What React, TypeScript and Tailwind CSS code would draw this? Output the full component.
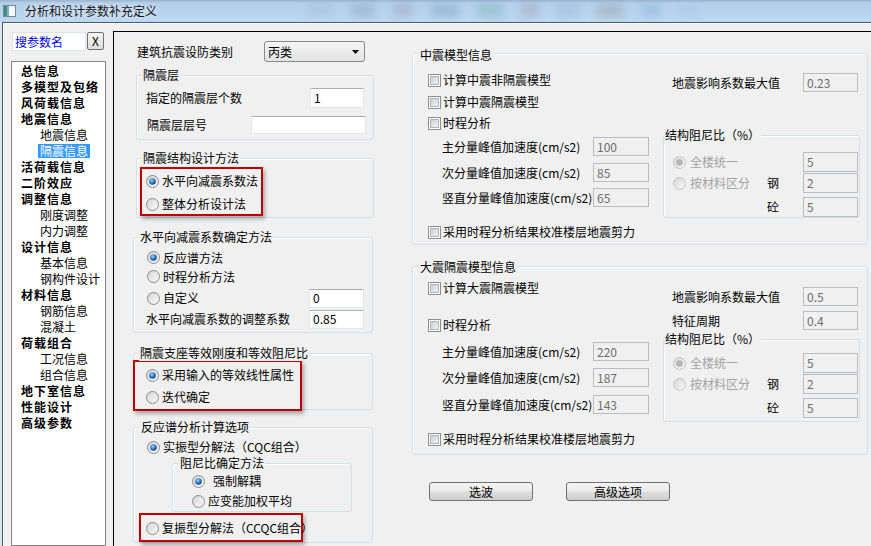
import React from 'react';

type Node = [string, number, boolean?];

const tree: Node[] = [
  ['总信息', 0],
  ['多模型及包络', 0],
  ['风荷载信息', 0],
  ['地震信息', 0],
  ['地震信息', 1],
  ['隔震信息', 1, true],
  ['活荷载信息', 0],
  ['二阶效应', 0],
  ['调整信息', 0],
  ['刚度调整', 1],
  ['内力调整', 1],
  ['设计信息', 0],
  ['基本信息', 1],
  ['钢构件设计', 1],
  ['材料信息', 0],
  ['钢筋信息', 1],
  ['混凝土', 1],
  ['荷载组合', 0],
  ['工况信息', 1],
  ['组合信息', 1],
  ['地下室信息', 0],
  ['性能设计', 0],
  ['高级参数', 0],
];

const Radio = ({ checked, disabled }: { checked?: boolean; disabled?: boolean }) => (
  <svg width="13" height="13" viewBox="0 0 13 13" className="shrink-0">
    <defs>
      <linearGradient id="rfill" x1="0" y1="0" x2="1" y2="1">
        <stop offset="0" stopColor="#d4d4d4" />
        <stop offset="1" stopColor="#fbfbfb" />
      </linearGradient>
      <radialGradient id="rdot" cx="0.4" cy="0.35" r="0.7">
        <stop offset="0" stopColor="#9ad6ff" />
        <stop offset="0.55" stopColor="#2a78c8" />
        <stop offset="1" stopColor="#0f3f78" />
      </radialGradient>
    </defs>
    <circle cx="6.5" cy="6.5" r="6" fill="url(#rfill)" stroke={disabled ? '#c4c4c4' : '#8c8c8c'} />
    {checked && <circle cx="6.5" cy="6.5" r="3.3" fill={disabled ? '#b4b4b4' : 'url(#rdot)'} />}
  </svg>
);

const Check = () => (
  <svg width="13" height="13" viewBox="0 0 13 13" className="shrink-0">
    <defs>
      <linearGradient id="cfill" x1="0" y1="0" x2="1" y2="1">
        <stop offset="0" stopColor="#c9cdd2" />
        <stop offset="1" stopColor="#f5f5f5" />
      </linearGradient>
    </defs>
    <rect x="0.5" y="0.5" width="12" height="12" fill="#fcfcfc" stroke="#8e8f8f" />
    <rect x="2.5" y="2.5" width="8" height="8" fill="url(#cfill)" stroke="#b0b4b9" />
  </svg>
);

const Field = ({ value, disabled, className }: { value?: string; disabled?: boolean; className: string }) => (
  <div
    className={`flex items-center px-[3px] border leading-[16px] ${
      disabled
        ? 'bg-[#f0f0f0] border-[#b9bdc1] text-[#6d6d6d]'
        : 'bg-white border-[#e2e7ee] border-t-[#abadb3] text-black'
    } ${className}`}
  >
    {value}
  </div>
);

const Group = ({
  title,
  className,
  lx = 'left-[5px]',
  ly = '-top-[9px]',
  children,
}: {
  title: string;
  className: string;
  lx?: string;
  ly?: string;
  children?: React.ReactNode;
}) => (
  <div className={`relative rounded-[3px] border border-[#d5dfe5] shadow-[inset_1px_1px_0_#fff] ${className}`}>
    <span className={`absolute ${ly} ${lx} bg-[#f0f0f0] px-[1px] leading-[16px] whitespace-nowrap`}>{title}</span>
    {children}
  </div>
);

const RedBox = ({ className, children }: { className: string; children: React.ReactNode }) => (
  <div className={`border-2 border-[#c00000] shadow-[2px_3px_4px_rgba(0,0,0,0.3)] ${className}`}>{children}</div>
);

const RadioRow = ({ label, checked, className }: { label: React.ReactNode; checked?: boolean; className: string }) => (
  <div className={`flex items-center gap-[3px] whitespace-nowrap ${className}`}>
    <Radio checked={checked} />
    <span>{label}</span>
  </div>
);

const CheckRow = ({ label, className }: { label: string; className: string }) => (
  <div className={`flex items-center gap-[2px] whitespace-nowrap ${className}`}>
    <Check />
    <span>{label}</span>
  </div>
);

const AccRow = ({ label, value, className }: { label: string; value: string; className: string }) => (
  <div className={`flex items-center h-[19px] ${className}`}>
    <span className="pl-[14px] w-[165px] whitespace-nowrap">{label}</span>
    <Field disabled value={value} className="w-[56px] h-[19px]" />
  </div>
);

const ValueRow = ({ label, value, className }: { label: string; value: string; className: string }) => (
  <div className={`flex items-center h-[19px] ${className}`}>
    <span className="pl-[9px] w-[140px]">{label}</span>
    <Field disabled value={value} className="w-[55px] h-[19px]" />
  </div>
);

const Damping = ({ className, pt }: { className: string; pt: string }) => (
  <Group title="结构阻尼比（%）" className={`w-[197px] h-[83px] ${className}`} lx="left-0" ly="-top-[9px]">
    <div className={`pl-[9px] ${pt}`}>
      <div className="flex items-center h-[20px]">
        <div className="w-[130px] flex items-center gap-[4px]">
          <Radio checked disabled />
          <span className="text-[#a3a3a3]">全楼统一</span>
        </div>
        <Field disabled value="5" className="w-[55px] h-[20px]" />
      </div>
      <div className="mt-[1px] flex items-center h-[20px]">
        <div className="w-[94px] flex items-center gap-[4px]">
          <Radio disabled />
          <span className="text-[#a3a3a3]">按材料区分</span>
        </div>
        <span className="w-[36px]">钢</span>
        <Field disabled value="2" className="w-[55px] h-[20px]" />
      </div>
      <div className="mt-[4px] flex items-center h-[20px]">
        <span className="ml-[94px] w-[36px]">砼</span>
        <Field disabled value="5" className="w-[55px] h-[20px]" />
      </div>
    </div>
  </Group>
);

const Button = ({ label }: { label: string }) => (
  <button className="w-[104px] h-[19px] rounded-[3px] border border-[#707070] bg-[linear-gradient(to_bottom,#f4f4f4_0%,#ebebeb_48%,#dddddd_52%,#cfcfcf_100%)] text-[12px] leading-[16px] text-black">
    {label}
  </button>
);

const App = () => {
  return (
    <div className="w-[871px] h-[546px] overflow-hidden flex flex-col bg-[#f0f0f0] text-[12px] leading-[16px] text-black font-['Noto_Sans_CJK_SC',sans-serif]">
      {/* title bar */}
      <div className="h-[22px] shrink-0 flex items-center overflow-hidden bg-[linear-gradient(to_bottom,#98b2cc_0px,#b4cfea_3px,#bdd8f2_100%)]">
        <svg width="13" height="12" viewBox="0 0 13 12" className="ml-[3px] shrink-0">
          <rect x="0.5" y="0.5" width="12" height="11" fill="#f4f6f8" stroke="#7c8590" />
          <rect x="1" y="1" width="3" height="10" fill="#3f8f7a" />
          <rect x="4" y="1" width="2" height="10" fill="#7fb0d8" />
        </svg>
        <span className="ml-[9px] text-[#151515] [text-shadow:0_0_6px_#ffffff]">分析和设计参数补充定义</span>
        <div className="ml-[150px] flex items-center gap-[18px] opacity-20 blur-[4px]">
          <div className="w-[26px] h-[14px] bg-[#8fa4bb]" />
          <div className="w-[24px] h-[14px] bg-[#5c6d80]" />
          <div className="w-[20px] h-[14px] bg-[#8a6470]" />
          <div className="w-[28px] h-[14px] bg-[#3f6b9a]" />
          <div className="w-[26px] h-[14px] bg-[#3d8a70]" />
          <div className="w-[18px] h-[14px] bg-[#9a5a66]" />
          <div className="w-[22px] h-[14px] bg-[#6b8fb8]" />
          <div className="w-[26px] h-[14px] bg-[#6e6a50]" />
          <div className="w-[20px] h-[14px] bg-[#4f86c2]" />
          <div className="w-[20px] h-[14px] bg-[#8fb6e0]" />
        </div>
      </div>

      <div className="flex flex-1 min-h-0">
        <div className="w-[2px] shrink-0 bg-[#dbe5ef]" />
        <div className="flex-1 flex border-l border-t border-[#4d5b69] shadow-[inset_1px_1px_0_#fafafa]">
          {/* sidebar */}
          <div className="w-[110px] shrink-0 pt-[9px] pl-[8px] flex flex-col">
            <div className="flex items-start">
              <div className="ml-[1px] w-[74px] h-[19px] bg-white border border-[#dde3ea] pl-[2px] flex items-center text-[#0000ff]">
                搜参数名
              </div>
              <div className="ml-[1px] w-[17px] h-[18px] rounded-[2px] border border-[#707070] bg-[linear-gradient(to_bottom,#f6f6f6,#dcdcdc)] flex items-center justify-center text-[12px]">
                X
              </div>
            </div>
            <div className="mt-[10px] w-[95px] h-[500px] bg-white border border-[#828790] pt-[1px]">
              {tree.map(([label, level, sel], i) =>
                level === 0 ? (
                  <div key={i} className="h-[16px] leading-[16px] pl-[9px] font-bold text-[12px] tracking-[1px] whitespace-nowrap">
                    {label}
                  </div>
                ) : (
                  <div key={i} className="h-[16px] pl-[26px] flex items-center">
                    <span
                      className={
                        sel ? 'px-[2px] leading-[14px] bg-[#3399ff] text-white' : 'px-[2px] leading-[16px]'
                      }
                    >
                      {label}
                    </span>
                  </div>
                )
              )}
            </div>
          </div>

          {/* main panel */}
          <div className="flex-1 mt-[8px] border-l border-t border-black flex">
            {/* left column */}
            <div className="w-[286px] shrink-0 pl-[19px] flex flex-col">
              <div className="mt-[9px] h-[21px] flex items-center">
                <span className="pl-[4px] w-[131px]">建筑抗震设防类别</span>
                <div className="w-[101px] h-[21px] rounded-[3px] border border-[#8a8a8a] bg-[linear-gradient(to_bottom,#f5f5f5,#e4e4e4)] flex items-center justify-between pl-[3px] pr-[5px]">
                  <span>丙类</span>
                  <svg width="7" height="4" viewBox="0 0 7 4">
                    <path d="M0 0H7L3.5 4Z" fill="#000" />
                  </svg>
                </div>
              </div>

              <Group title="隔震层" className="mt-[13px] ml-[3px] w-[238px] h-[65px]">
                <div className="pt-[12px] pl-[9px]">
                  <div className="flex items-center h-[20px]">
                    <span className="w-[164px]">指定的隔震层个数</span>
                    <Field value="1" className="w-[54px] h-[20px]" />
                  </div>
                  <div className="flex items-center h-[18px] mt-[8px]">
                    <span className="pl-[1px] w-[105px]">隔震层层号</span>
                    <Field className="w-[115px] h-[18px]" />
                  </div>
                </div>
              </Group>

              <Group title="隔震结构设计方法" className="mt-[18px] ml-[3px] w-[238px] h-[60px]">
                <RedBox className="ml-[3px] mt-[8px] w-[123px] h-[49px] pt-[2px] pl-[4px]">
                  <RadioRow checked label="水平向减震系数法" className="h-[20px]" />
                  <RadioRow label="整体分析设计法" className="h-[20px] mt-[3px]" />
                </RedBox>
              </Group>

              <Group title="水平向减震系数确定方法" className="mt-[19px] w-[240px] h-[96px]">
                <div className="pt-[10px] pl-[12px]">
                  <RadioRow checked label="反应谱方法" className="h-[19px] pl-[1px]" />
                  <RadioRow label="时程分析方法" className="h-[19px] pl-[1px]" />
                  <div className="mt-[2px] h-[20px] flex items-center">
                    <div className="w-[163px] flex items-center gap-[3px] pl-[1px]">
                      <Radio />
                      <span>自定义</span>
                    </div>
                    <Field value="0" className="w-[55px] h-[19px]" />
                  </div>
                  <div className="mt-[1px] h-[20px] flex items-center">
                    <span className="w-[163px]">水平向减震系数的调整系数</span>
                    <Field value="0.85" className="w-[55px] h-[19px]" />
                  </div>
                </div>
              </Group>

              <Group title="隔震支座等效刚度和等效阻尼比" className="mt-[20px] w-[240px] h-[57px]">
                <RedBox className="-ml-[1px] mt-[6px] w-[169px] h-[51px] pt-[3px] pl-[11px]">
                  <RadioRow checked label="采用输入的等效线性属性" className="h-[20px]" />
                  <RadioRow label="迭代确定" className="h-[20px] mt-[2px]" />
                </RedBox>
              </Group>

              <Group title="反应谱分析计算选项" className="mt-[17px] w-[240px] h-[116px]" lx="left-[6px]">
                <div className="pt-[9px] pl-[13px]">
                  <RadioRow checked label="实振型分解法（CQC组合）" className="h-[20px]" />
                </div>
                <Group title="阻尼比确定方法" className="mt-[6px] ml-[38px] w-[180px] h-[49px]" lx="left-[6px]">
                  <div className="pt-[7px] pl-[19px]">
                    <RadioRow checked label={<span className="pl-[5px]">强制解耦</span>} className="h-[20px]" />
                    <RadioRow label="应变能加权平均" className="h-[20px]" />
                  </div>
                </Group>
                <RedBox className="mt-[1px] ml-[5px] w-[164px] h-[29px] pt-[1px] pl-[5px]">
                  <RadioRow label="复振型分解法（CCQC组合）" className="h-[20px] mt-[2px]" />
                </RedBox>
              </Group>
            </div>

            {/* right column */}
            <div className="flex-1 pl-[12px] flex flex-col">
              <Group title="中震模型信息" className="mt-[21px] w-[456px] h-[192px]" lx="left-[6px]" ly="-top-[7px]">
                <div className="flex">
                  <div className="w-[250px] pl-[15px] flex flex-col">
                    <CheckRow label="计算中震非隔震模型" className="mt-[16px] h-[20px]" />
                    <CheckRow label="计算中震隔震模型" className="mt-[2px] h-[20px]" />
                    <CheckRow label="时程分析" className="mt-[1px] h-[20px]" />
                    <AccRow label="主分量峰值加速度(cm/s2)" value="100" className="mt-[4px]" />
                    <AccRow label="次分量峰值加速度(cm/s2)" value="85" className="mt-[7px]" />
                    <AccRow label="竖直分量峰值加速度(cm/s2)" value="65" className="mt-[6px]" />
                  </div>
                  <div className="w-[197px] flex flex-col">
                    <ValueRow label="地震影响系数最大值" value="0.23" className="mt-[19px]" />
                    <Damping className="mt-[43px]" pt="pt-[16px]" />
                  </div>
                </div>
                <CheckRow label="采用时程分析结果校准楼层地震剪力" className="mt-[4px] ml-[15px] h-[20px]" />
              </Group>

              <Group title="大震隔震模型信息" className="mt-[21px] w-[456px] h-[189px]" lx="left-[6px]" ly="-top-[8px]">
                <div className="flex">
                  <div className="w-[250px] pl-[15px] flex flex-col">
                    <CheckRow label="计算大震隔震模型" className="mt-[11px] h-[20px]" />
                    <CheckRow label="时程分析" className="mt-[17px] h-[20px]" />
                    <AccRow label="主分量峰值加速度(cm/s2)" value="220" className="mt-[7px]" />
                    <AccRow label="次分量峰值加速度(cm/s2)" value="187" className="mt-[7px]" />
                    <AccRow label="竖直分量峰值加速度(cm/s2)" value="143" className="mt-[8px]" />
                  </div>
                  <div className="w-[197px] flex flex-col">
                    <ValueRow label="地震影响系数最大值" value="0.5" className="mt-[20px]" />
                    <ValueRow label="特征周期" value="0.4" className="mt-[5px]" />
                    <Damping className="mt-[9px]" pt="pt-[13px]" />
                  </div>
                </div>
                <CheckRow label="采用时程分析结果校准楼层地震剪力" className="mt-[7px] ml-[15px] h-[20px]" />
              </Group>

              <div className="mt-[27px] ml-[17px] flex gap-[33px]">
                <Button label="选波" />
                <Button label="高级选项" />
              </div>
            </div>
          </div>
        </div>
      </div>
    </div>
  );
};

export default App;
